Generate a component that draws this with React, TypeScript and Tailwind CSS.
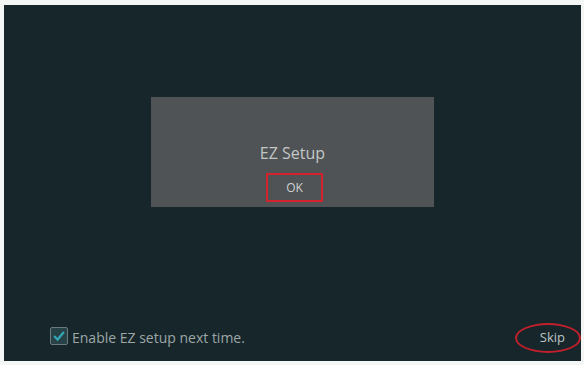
import React, { useState } from 'react';

function App() {
  const [enabled, setEnabled] = useState(true);

  return (
    <div className="w-[584px] h-[365px] bg-[#f4f6f6] pt-[5px] pl-[4px] font-['Open_Sans',sans-serif]">
      <div className="w-[577px] h-[356px] bg-[#16262a] flex flex-col">
        <div className="flex-1 flex justify-center pt-[92px]">
          <div className="w-[283px] h-[110px] bg-[#4f5355] flex flex-col items-center pt-[46px]">
            <div className="text-[16px] leading-[20px] text-[#c4c7c7]">EZ Setup</div>
            <button className="mt-[10px] ml-[4px] w-[57px] h-[29px] border-[2.5px] border-[#d3232e] text-[12px] text-[#d0d2d2] flex items-center justify-center">
              OK
            </button>
          </div>
        </div>
        <div className="h-[50px] flex items-start pt-[16px] pl-[46px] pr-[3px] relative">
          <button
            onClick={() => setEnabled(!enabled)}
            className="w-[18px] h-[18px] rounded-[2px] border border-[#6c7a7c] bg-[#274246] flex items-center justify-center"
          >
            {enabled && (
              <svg width="14" height="14" viewBox="0 0 13 13">
                <path d="M2 6.5 L5.2 9.8 L11 2.8" fill="none" stroke="#32a9b6" strokeWidth="2" />
              </svg>
            )}
          </button>
          <span className="ml-[4px] mt-[2px] text-[14px] leading-[18px] text-[#9ea6a7]">Enable EZ setup next time.</span>
          <div className="ml-auto mr-[13px] mt-[1px] text-[13px] leading-[18px] text-[#bfc4c4]">Skip</div>
          <div className="absolute right-[0px] top-[12px] w-[66px] h-[30px] rounded-[50%] border-2 border-[#c0202c]" />
        </div>
      </div>
    </div>
  );
}

export default App;
